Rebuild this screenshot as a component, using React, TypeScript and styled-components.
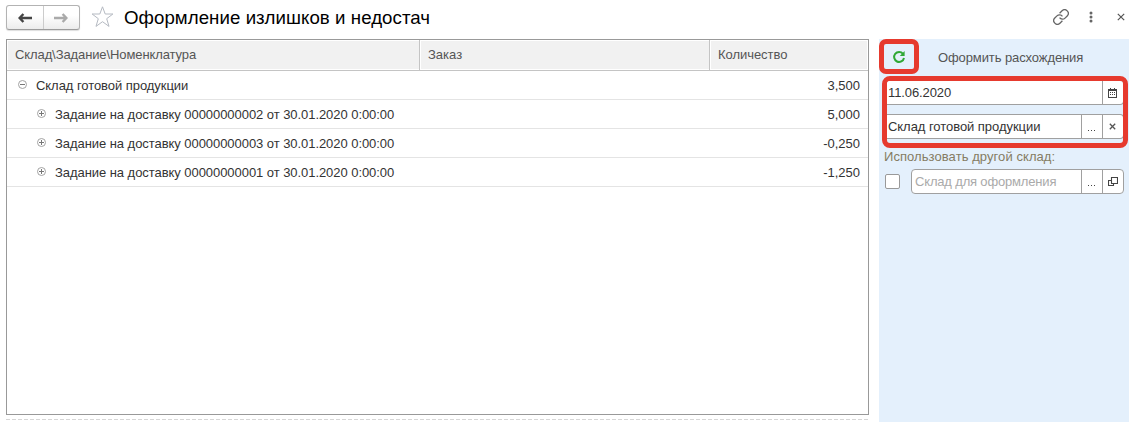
import React from "react";
import styled, { createGlobalStyle } from "styled-components";

const GlobalStyle = createGlobalStyle`
  * { box-sizing: border-box; }
  body {
    margin: 0;
    background: #fff;
    color: #333;
    font: 13px/16px "Liberation Sans", Arial, sans-serif;
    overflow: hidden;
  }
`;

const Page = styled.div`
  width: 1137px;
  height: 422px;
  display: flex;
  flex-direction: column;
  overflow: hidden;
`;

const TitleBar = styled.header`
  height: 39px;
  flex: none;
  display: flex;
  align-items: flex-start;
  padding: 5px 12px 0 6px;
`;

const NavGroup = styled.div`
  width: 74px;
  height: 25px;
  display: flex;
  border: 1px solid #b3b3b3;
  border-bottom-color: #9c9c9c;
  border-radius: 3px;
  background: linear-gradient(#fff 40%, #ececec);
  box-shadow: 0 1px 1px #ddd;
`;

const NavButton = styled.button`
  flex: 1;
  display: flex;
  align-items: center;
  justify-content: center;
  padding: 0;
  border: 0;
  background: none;
  & + & { border-left: 1px solid #ccc; }
`;

const Star = styled.svg`
  margin: 0 0 0 10px;
  flex: none;
`;

const Title = styled.h1`
  flex: 1;
  margin: 0 0 0 10px;
  color: #000;
  font-size: 18.67px;
  font-weight: 400;
  line-height: 25px;
  letter-spacing: 0.06px;
  white-space: nowrap;
`;

const WindowTools = styled.div`
  display: flex;
  align-items: center;
  height: 24px;
`;

const Tool = styled.svg<{ $gap?: number }>`
  display: block;
  flex: none;
  margin-left: ${(p) => p.$gap ?? 0}px;
`;

const Body = styled.main`
  flex: 1;
  display: flex;
  padding: 0 8px 0 6px;
  justify-content: space-between;
`;

const ListArea = styled.section`
  width: 863px;
`;

const Table = styled.div`
  height: 376px;
  border: 1px solid #999;
`;

const DashedRule = styled.div`
  height: 1px;
  margin-top: 4px;
  background: repeating-linear-gradient(90deg, #d6d6d6 0 4px, transparent 4px 6px);
`;

const columns = "413px 290px 1fr";

const HeaderRow = styled.div`
  display: grid;
  grid-template-columns: ${columns};
  height: 31px;
  border-bottom: 1px solid #c4c4c4;
`;

const HeaderCell = styled.div<{ $spacing?: number }>`
  padding: 6px 0 0 7px;
  border: 1px solid #fff;
  background: #f1f1f1;
  color: #555;
  letter-spacing: ${(p) => p.$spacing ?? 0}px;
  & + & { box-shadow: -1px 0 #c4c4c4; }
`;

const Row = styled.div`
  display: grid;
  grid-template-columns: ${columns};
  height: 29px;
  border-bottom: 1px solid #e4e4e4;
`;

const TreeCell = styled.div<{ $level: number }>`
  display: flex;
  align-items: flex-start;
  padding-left: ${(p) => 11 + p.$level * 19}px;
  white-space: nowrap;
`;

const ToggleIcon = styled.svg`
  flex: none;
  margin-top: 9px;
`;

const TreeLabel = styled.span<{ $spacing: number }>`
  margin: 7px 0 0 9px;
  letter-spacing: ${(p) => p.$spacing}px;
`;

const AmountCell = styled.div`
  grid-column: 3;
  padding: 7px 8px 0 0;
  text-align: right;
`;

const SidePanel = styled.aside`
  width: 250px;
  background: #e4f0fc;
`;

const CommandBar = styled.div`
  display: flex;
  height: 37px;
`;

const RefreshButton = styled.button`
  width: 40px;
  height: 35px;
  padding: 0;
  display: flex;
  align-items: center;
  justify-content: center;
  border: 5px solid #e63a2e;
  border-radius: 7px;
  background: transparent;
`;

const Command = styled.span`
  margin: 11px 0 0 19px;
  color: #555;
  letter-spacing: -0.1px;
  white-space: nowrap;
`;

const Highlight = styled.div`
  width: 246px;
  height: 72px;
  margin-left: 3px;
  border: 5px solid #e63a2e;
  border-radius: 8px;
  display: flex;
  flex-direction: column;
  gap: 9px;
  overflow: hidden;
  & > :first-child { margin-top: -1px; }
`;

const Field = styled.div<{ $round?: boolean; $width: number }>`
  width: ${(p) => p.$width}px;
  height: 25px;
  flex: none;
  display: flex;
  border: 1px solid #a0a0a0;
  border-left-width: ${(p) => (p.$round ? 1 : 0)}px;
  border-radius: ${(p) => (p.$round ? "4px" : "0 4px 4px 0")};
  background: #fff;
`;

const FieldText = styled.span<{ $muted?: boolean; $spacing?: number }>`
  flex: 1;
  padding: ${(p) => (p.$muted ? "4px 0 0 3px" : "4px 0 0 1px")};
  color: ${(p) => (p.$muted ? "#aaa" : "#333")};
  letter-spacing: ${(p) => p.$spacing ?? 0}px;
  white-space: nowrap;
`;

const FieldButton = styled.button`
  width: 21px;
  padding: 0 1px 0 0;
  display: flex;
  align-items: center;
  justify-content: center;
  border: 0;
  border-left: 1px solid #a0a0a0;
  background: none;
`;

const Caption = styled.div`
  padding: 1px 0 0 5px;
  height: 21px;
  color: #857c63;
  letter-spacing: 0.07px;
`;

const OtherStore = styled.div`
  display: flex;
  padding-left: 6px;
  gap: 11px;
  align-items: center;
`;

const CheckBox = styled.span`
  width: 15px;
  height: 15px;
  border: 1px solid #999;
  border-radius: 2px;
  background: #fff;
`;

const Arrow = ({ flip, color }: { flip?: boolean; color: string }) => (
  <svg width="14" height="10" viewBox="0 0 14 10">
    <path
      transform={flip ? "translate(14 0) scale(-1 1)" : undefined}
      d="M5.4 1 1.6 5l3.8 4M2 5h12"
      fill="none"
      stroke={color}
      strokeWidth="2.4"
    />
  </svg>
);

const TreeToggle = ({ open }: { open?: boolean }) => (
  <ToggleIcon width="9" height="9" viewBox="0 0 9 9">
    <circle cx="4.5" cy="4.5" r="4" fill="none" stroke="#a2a2a2" />
    <path d={open ? "M2 4.5h5" : "M2 4.5h5M4.5 2v5"} stroke="#777" />
  </ToggleIcon>
);

const Dots = () => (
  <svg width="8" height="9" viewBox="0 0 8 9" fill="#444">
    <path d="M0 8h1v1H0zM3 8h1v1H3zM6 8h1v1H6z" />
  </svg>
);

const rows = [
  { label: "Склад готовой продукции", amount: "3,500", level: 0 },
  { label: "Задание на доставку 00000000002 от 30.01.2020 0:00:00", amount: "5,000", level: 1 },
  { label: "Задание на доставку 00000000003 от 30.01.2020 0:00:00", amount: "-0,250", level: 1 },
  { label: "Задание на доставку 00000000001 от 30.01.2020 0:00:00", amount: "-1,250", level: 1 },
];

export default function App() {
  return (
    <Page>
      <GlobalStyle />
      <TitleBar>
        <NavGroup>
          <NavButton><Arrow color="#444" /></NavButton>
          <NavButton><Arrow flip color="#aaa" /></NavButton>
        </NavGroup>
        <Star width="24" height="24" viewBox="0 0 24 24">
          <path d="M12.5 1.8 15.2 9h7.7l-6.2 4.7 2.3 7.7-6.5-4.7L6 21.4l2.3-7.7L2.1 9h7.7z" fill="none" stroke="#b5bac2" />
        </Star>
        <Title>Оформление излишков и недостач</Title>
        <WindowTools>
          <Tool width="16" height="16" viewBox="1 1 22 22" fill="none" stroke="#666" strokeWidth="1.8">
            <path d="M10 13a5 5 0 0 0 7.54.54l3-3a5 5 0 0 0-7.07-7.07l-3.4 3.4M14 11a5 5 0 0 0-7.54-.54l-3 3a5 5 0 0 0 7.07 7.07l3.4-3.4" />
          </Tool>
          <Tool $gap={20} width="4" height="12" viewBox="0 0 4 12" fill="#666">
            <circle cx="2" cy="2" r="1.5" /><circle cx="2" cy="6" r="1.5" /><circle cx="2" cy="10" r="1.5" />
          </Tool>
          <Tool $gap={24} width="8" height="8" viewBox="0 0 8 8" stroke="#555" strokeWidth="1.2">
            <path d="m.8.8 6.4 6.4M7.2.8.8 7.2" />
          </Tool>
        </WindowTools>
      </TitleBar>
      <Body>
        <ListArea>
          <Table>
            <HeaderRow>
              <HeaderCell $spacing={-0.1}>Склад\Задание\Номенклатура</HeaderCell>
              <HeaderCell>Заказ</HeaderCell>
              <HeaderCell $spacing={-0.05}>Количество</HeaderCell>
            </HeaderRow>
            {rows.map((r) => (
              <Row key={r.label}>
                <TreeCell $level={r.level}>
                  <TreeToggle open={r.level === 0} />
                  <TreeLabel $spacing={-0.055}>{r.label}</TreeLabel>
                </TreeCell>
                <AmountCell>{r.amount}</AmountCell>
              </Row>
            ))}
          </Table>
          <DashedRule />
        </ListArea>
        <SidePanel>
          <CommandBar>
            <RefreshButton>
              <svg width="14" height="14" viewBox="0 0 14 14">
                <path d="M11 3.8A5 5 0 1 0 12 8" fill="none" stroke="#2fa836" strokeWidth="2" />
                <path d="M12.6 1v5H7.8z" fill="#2fa836" />
              </svg>
            </RefreshButton>
            <Command>Оформить расхождения</Command>
          </CommandBar>
          <Highlight>
            <Field $width={237}>
              <FieldText $spacing={-0.1}>11.06.2020</FieldText>
              <FieldButton>
                <svg width="9" height="10" viewBox="0 0 9 10" fill="#444">
                  <path d="M0 1h9v2H0zM2 0h1v2H2zM6 0h1v2H6zM0 3h1v7H0zM8 3h1v7H8zM1 9h7v1H1zM2 4h1v1H2zM4 4h1v1H4zM6 4h1v1H6zM2 6h1v1H2zM4 6h1v1H4zM6 6h1v1H6z" />
                </svg>
              </FieldButton>
            </Field>
            <Field $width={237}>
              <FieldText $spacing={-0.05}>Склад готовой продукции</FieldText>
              <FieldButton><Dots /></FieldButton>
              <FieldButton>
                <svg width="7" height="7" viewBox="0 0 7 7" stroke="#555" strokeWidth="1.3">
                  <path d="m.8.8 5.4 5.4M6.2.8.8 6.2" />
                </svg>
              </FieldButton>
            </Field>
          </Highlight>
          <Caption>Использовать другой склад:</Caption>
          <OtherStore>
            <CheckBox />
            <Field $round $width={213}>
              <FieldText $muted $spacing={-0.17}>Склад для оформления</FieldText>
              <FieldButton><Dots /></FieldButton>
              <FieldButton>
                <svg width="10" height="10" viewBox="0 0 10 10" fill="none" stroke="#444" strokeWidth="1.1">
                  <path d="M3.5.5h6v6h-6zM3 3.5H.5v5h5V7" />
                </svg>
              </FieldButton>
            </Field>
          </OtherStore>
        </SidePanel>
      </Body>
    </Page>
  );
}
